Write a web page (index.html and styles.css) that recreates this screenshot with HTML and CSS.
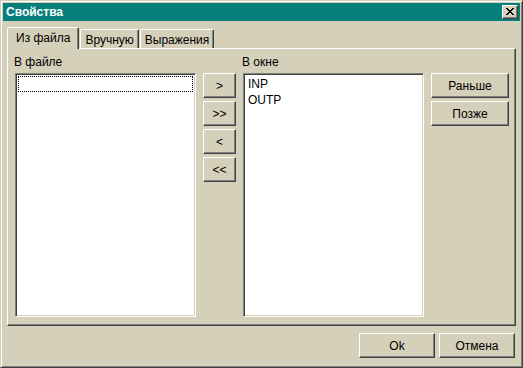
FILE: index.html
```html
<!DOCTYPE html>
<html lang="ru">
<head>
  <meta charset="UTF-8">
  <title>Свойства</title>
  <link rel="stylesheet" href="styles.css">
</head>
<body>
  <div class="window">
    <div class="titlebar">
      <span class="title">Свойства</span>
      <button class="close">
        <svg width="8" height="7" viewBox="0 0 8 7">
          <path d="M0 0h2v1H0zM6 0h2v1H6zM1 1h2v1H1zM5 1h2v1H5zM2 2h4v1H2zM3 3h2v1H3zM2 4h4v1H2zM1 5h2v1H1zM5 5h2v1H5zM0 6h2v1H0zM6 6h2v1H6z" fill="#000"/>
        </svg>
      </button>
    </div>
    <div class="content">
      <div class="tabs">
        <div class="tab active">Из файла</div>
        <div class="tab">Вручную</div>
        <div class="tab">Выражения</div>
      </div>
      <div class="panel">
        <div class="column">
          <div class="label">В файле</div>
          <div class="listbox">
            <div class="item focus"></div>
          </div>
        </div>
        <div class="move-buttons">
          <button class="btn">&gt;</button>
          <button class="btn">&gt;&gt;</button>
          <button class="btn">&lt;</button>
          <button class="btn">&lt;&lt;</button>
        </div>
        <div class="column">
          <div class="label">В окне</div>
          <div class="listbox">
            <div class="item">INP</div>
            <div class="item">OUTP</div>
          </div>
        </div>
        <div class="order-buttons">
          <button class="btn">Раньше</button>
          <button class="btn">Позже</button>
        </div>
      </div>
      <div class="footer">
        <button class="btn">Ok</button>
        <button class="btn">Отмена</button>
      </div>
    </div>
  </div>
</body>
</html>
```

FILE: styles.css
```css
* {
  box-sizing: border-box;
}
body {
  margin: 0;
  background-color: #d5d0b9;
  font-family: "Liberation Sans", Arial, sans-serif;
  font-size: 12px;
  color: #000;
}
.window {
  width: 523px;
  height: 368px;
  padding: 2px;
  border: 1px solid;
  border-color: #d5d0b9 #404040 #404040 #d5d0b9;
  box-shadow: inset 1px 1px #fff, inset -1px -1px #808080;
  background-color: #d5d0b9;
}
.titlebar {
  height: 18px;
  display: flex;
  align-items: center;
  justify-content: space-between;
  padding: 0 2px 0 3px;
  background-color: #067f7a;
  color: #fff;
  font-weight: bold;
}
.close {
  width: 16px;
  height: 14px;
  padding: 0 0 1px 0;
  display: flex;
  align-items: center;
  justify-content: center;
  background-color: #d5d0b9;
  border: 1px solid;
  border-color: #fff #404040 #404040 #fff;
  box-shadow: inset -1px -1px #808080;
}
.close svg {
  display: block;
}
.content {
  padding: 6px 4px 0;
}
.tabs {
  display: flex;
  align-items: flex-end;
  height: 21px;
}
.tab {
  height: 19px;
  padding: 3px 4px 0;
  margin-left: 1px;
  line-height: 14px;
  border-top: 1px solid #fff;
  border-left: 1px solid #fff;
  border-right: 1px solid #404040;
  border-radius: 2px 2px 0 0;
  box-shadow: inset -1px 0 #808080;
  background-color: #d5d0b9;
}
.tab.active {
  position: relative;
  z-index: 1;
  height: 22px;
  margin: 0 0 -1px 0;
  padding: 3px 8px 0;
}
.panel {
  height: 278px;
  display: flex;
  align-items: flex-start;
  gap: 7px;
  padding: 6px 0 0 7px;
  border: 1px solid;
  border-color: #fff #404040 #404040 #fff;
  box-shadow: inset -1px -1px #808080;
}
.label {
  height: 14px;
  line-height: 14px;
  margin: 0 0 4px -1px;
}
.listbox {
  width: 181px;
  height: 244px;
  padding: 2px;
  background-color: #fff;
  border: 1px solid;
  border-color: #808080 #fff #fff #808080;
  box-shadow: inset 1px 1px #404040, inset -1px -1px #d5d0b9;
}
.item {
  height: 16px;
  line-height: 16px;
  padding-left: 2px;
}
.item.focus {
  outline: 1px dotted #000;
  outline-offset: -1px;
}
.btn {
  height: 25px;
  padding: 0;
  font: inherit;
  color: #000;
  background-color: #d5d0b9;
  border: 1px solid;
  border-color: #fff #404040 #404040 #fff;
  box-shadow: inset -1px -1px #808080;
}
.move-buttons,
.order-buttons {
  display: flex;
  flex-direction: column;
  gap: 3px;
  margin-top: 18px;
}
.move-buttons .btn {
  width: 33px;
}
.order-buttons .btn {
  width: 78px;
}
.footer {
  display: flex;
  justify-content: flex-end;
  gap: 4px;
  margin-top: 7px;
  padding-right: 1px;
}
.footer .btn {
  width: 76px;
}
```
